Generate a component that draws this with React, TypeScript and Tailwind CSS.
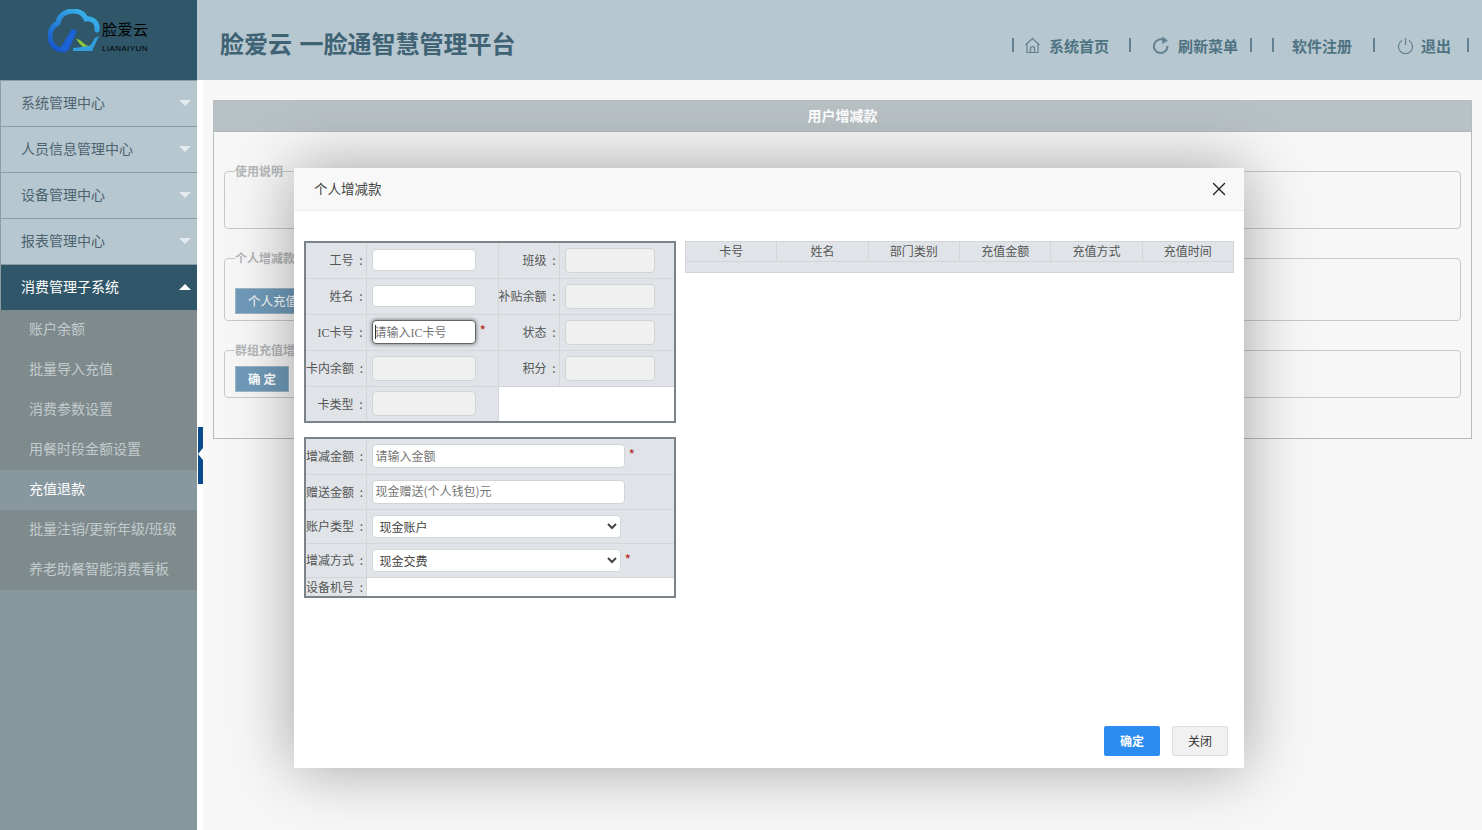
import React from 'react';
import { X } from 'lucide-react';

const font = "[font-family:'Noto_Sans_CJK_SC','Microsoft_YaHei',sans-serif]";

const menus = ['系统管理中心', '人员信息管理中心', '设备管理中心', '报表管理中心'];
const subMenus = ['账户余额', '批量导入充值', '消费参数设置', '用餐时段金额设置', '充值退款', '批量注销/更新年级/班级', '养老助餐智能消费看板'];

const Caret: React.FC<{ up?: boolean }> = ({ up }) => (
  <span
    className={`w-0 h-0 border-x-[6px] border-x-transparent ${up ? 'border-b-[6px] border-b-white' : 'border-t-[6px] border-t-[#e4ebee]'}`}
  />
);

const Logo: React.FC = () => (
  <div className="h-20 bg-[#2f5669] flex items-start pl-[48px] pt-[9px] shrink-0">
    <svg width="54" height="46" viewBox="0 0 54 46" fill="none">
      <defs>
        <linearGradient id="cloud" x1="0" y1="1" x2="0.8" y2="0">
          <stop offset="0" stopColor="#1450c8" />
          <stop offset="1" stopColor="#39b6ea" />
        </linearGradient>
      </defs>
      <path
        d="M16 41C6 41 2 34 2 27C2 20 6 16 10 14C11 6 18 2 25 2C31 2 36 5 38 10C44 9 50 13 49 21"
        stroke="url(#cloud)"
        strokeWidth="5"
        strokeLinecap="round"
      />
      <path d="M11 41L24 20L29 22L20 42Z" fill="#1b62d4" />
      <path d="M28 30C34 30 35 36 41 37C44 35 46 33 48 32C46 40 41 42 38 40C34 38 32 35 28 30Z" fill="#8cc63f" />
      <path d="M25 42H44L51 27L47 29L42 37L25 39Z" fill="#2f9fe0" />
    </svg>
    <div className="pt-[9px] text-black">
      <div className="text-[15px] leading-[22px] tracking-[0.5px]">脸爱云</div>
      <div className="text-[8px] leading-[12px] tracking-[0.4px] [font-family:'Liberation_Sans',sans-serif] mt-[3px]">LIANAIYUN</div>
    </div>
  </div>
);

const Sidebar: React.FC = () => (
  <aside className="w-[197px] shrink-0 bg-[#87989f] flex flex-col">
    <Logo />
    {menus.map((m, i) => (
      <div
        key={m}
        className={`bg-[#b6c7cf] border-l border-b border-[#8b9ca5] pl-5 pr-[6px] pb-[2px] flex items-center justify-between text-[14px] text-[#4d6370] ${i === 0 ? 'h-[47px] border-t' : 'h-[46px]'}`}
      >
        {m}
        <Caret />
      </div>
    ))}
    <div className="h-[45px] bg-[#2f5669] border-l border-[#8b9ca5] pl-5 pr-[6px] pb-[2px] flex items-center justify-between text-[14px] text-white">
      消费管理子系统
      <Caret up />
    </div>
    {subMenus.map((s) => (
      <div
        key={s}
        className={`h-10 pl-[29px] pb-[2px] flex items-center text-[14px] [font-family:'Liberation_Sans','Noto_Sans_CJK_SC',sans-serif] ${s === '充值退款' ? 'bg-[#87989f] text-white' : 'bg-[#7f8a8d] text-[#c3cace]'}`}
      >
        {s}
      </div>
    ))}
  </aside>
);

const Header: React.FC = () => (
  <header className="h-20 bg-[#b6c7cf] flex items-center justify-between pl-[23px] pr-[13px] text-[#4e7382] shrink-0">
    <h1 className="text-[24px] font-bold text-[#3f6375] leading-none pt-[6px] [word-spacing:2px]">脸爱云 一脸通智慧管理平台</h1>
    <nav className="flex items-center text-[15px] font-bold pt-[10px] leading-none">
      <span className="w-[2px] h-[14px] bg-[#628090]" />
      <svg className="ml-[10px]" width="17" height="17" viewBox="0 0 17 17" fill="none" stroke="#628090" strokeWidth="1.2">
        <path d="M1.5 8L8.5 1.5L15.5 8M3 7V15.5H14V7" />
        <path d="M6.5 15V11.5C6.5 9 10.5 9 10.5 11.5V15" />
      </svg>
      <span className="ml-[8px]">系统首页</span>
      <span className="ml-[20px] w-[2px] h-[14px] bg-[#628090]" />
      <svg className="ml-[21px]" width="17" height="18" viewBox="0 0 17 18" fill="none" stroke="#628090" strokeWidth="2">
        <path d="M12.5 4.5A6.8 6.8 0 1 0 15.5 10" />
        <path d="M10.5 1L15.5 4.5L10.5 7.5Z" fill="#628090" strokeWidth="0.5" />
      </svg>
      <span className="ml-[9px]">刷新菜单</span>
      <span className="ml-[12px] w-[2px] h-[14px] bg-[#628090]" />
      <span className="ml-[20px] w-[2px] h-[14px] bg-[#628090]" />
      <span className="ml-[18px]">软件注册</span>
      <span className="ml-[21px] w-[2px] h-[14px] bg-[#628090]" />
      <svg className="ml-[22px]" width="17" height="17" viewBox="0 0 17 17" fill="none" stroke="#628090" strokeWidth="1.2">
        <path d="M5 3.5A7 7 0 1 0 12 3.5" />
        <path d="M8.5 1V8" />
      </svg>
      <span className="ml-[7px]">退出</span>
      <span className="ml-[16px] w-[2px] h-[14px] bg-[#628090]" />
    </nav>
  </header>
);

const Fieldset: React.FC<{ title: string; className: string; children?: React.ReactNode }> = ({ title, className, children }) => (
  <fieldset className={`border border-[#c6c9ca] rounded-[4px] pl-[10px] ${className}`}>
    <legend className="text-[12px] leading-[14px] font-bold text-[#b4b6b7]">{title}</legend>
    {children}
  </fieldset>
);

const Panel: React.FC = () => (
  <div className="ml-[10px] mt-5 mr-[10px] h-[339px] border border-[#b5bcbf] flex flex-col">
    <div className="h-[31px] bg-[#b8c1c4] border-b border-[#b0b8bb] text-white text-[14px] font-bold pb-[2px] flex items-center justify-center shrink-0">用户增减款</div>
    <div className="px-[10px] pt-[32px] flex flex-col">
      <Fieldset title="使用说明" className="h-[65px]" />
      <Fieldset title="个人增减款" className="h-[70px] mt-[22px]">
        <button className="mt-[23px] h-[26px] w-[110px] bg-[#709bb9] border border-[#9bb5c6] text-white text-[12.5px] text-left pl-3">个人充值</button>
      </Fieldset>
      <Fieldset title="群组充值增减款" className="h-[55px] mt-[22px]">
        <button className="mt-[9px] h-[26px] w-[54px] bg-[#709bb9] border border-[#9bb5c6] text-white text-[12.5px] font-bold">确 定</button>
      </Fieldset>
    </div>
  </div>
);

const cell = 'border border-[#d2d6d9] bg-[#e0e4e8] p-0';
const labelCell = `${cell} text-right text-[12px] text-[#555] whitespace-nowrap pr-[3px] [word-spacing:3px]`;

const boxBase = 'block rounded-[4px] text-[12px] outline-none placeholder:text-[#757575]';

const TextBox: React.FC<{ disabled?: boolean; placeholder?: string; wide?: boolean }> = ({ disabled, placeholder, wide }) => (
  <input
    disabled={disabled}
    placeholder={placeholder}
    className={`${boxBase} border border-[#d0d4d6] ${wide ? 'w-[253px] h-[24px] bg-white px-[3px] pb-[2px]' : disabled ? 'w-[104px] h-[25px] bg-[#f0f0f0] px-[2px]' : 'w-[104px] h-[22px] bg-white px-[2px]'}`}
  />
);

const FocusedBox: React.FC = () => (
  <div className="relative">
    <input
      placeholder="请输入IC卡号"
      className={`${boxBase} w-[104px] h-[24px] px-[2px] pt-[2px] bg-white border border-[#666] shadow-[0_0_4px_rgba(0,0,0,0.55)] [font-family:'Liberation_Serif','Noto_Sans_CJK_SC',serif]`}
    />
    <span className="absolute left-[3px] top-[5px] w-px h-[14px] bg-[#333]" />
  </div>
);

const Star: React.FC<{ className?: string }> = ({ className }) => (
  <span className={`text-[#b3261e] text-[14px] leading-none ml-[4px] mt-[3px] ${className ?? ''}`}>*</span>
);

const infoRows: { a: React.ReactNode; b?: string; focus?: boolean; aDisabled?: boolean }[] = [
  { a: '工号 :', b: '班级 :' },
  { a: '姓名 :', b: '补贴余额 :' },
  { a: <><span className="[font-family:'Liberation_Serif',serif]">IC</span>卡号 :</>, b: '状态 :', focus: true },
  { a: '卡内余额 :', b: '积分 :', aDisabled: true },
  { a: '卡类型 :', aDisabled: true },
];

const InfoTable: React.FC = () => (
  <table className="w-[372px] border-collapse border-2 border-[#7a8488] table-fixed">
    <colgroup>
      <col className="w-[61px]" />
      <col className="w-[132px]" />
      <col className="w-[61px]" />
      <col />
    </colgroup>
    <tbody>
      {infoRows.map((r, i) => (
        <tr key={i} className="h-[36px]">
          <td className={labelCell}>{r.a}</td>
          <td className={`${cell} pl-[5px]`}>
            {r.focus ? (
              <div className="flex items-start">
                <FocusedBox />
                <Star />
              </div>
            ) : (
              <TextBox disabled={r.aDisabled} />
            )}
          </td>
          {r.b ? (
            <>
              <td className={labelCell}>{r.b}</td>
              <td className={`${cell} pl-[5px]`}>
                <input disabled className="block w-[90px] h-[25px] rounded-[4px] bg-[#f0f0f0] border border-[#d0d4d6]" />
              </td>
            </>
          ) : (
            <td colSpan={2} className="bg-white" />
          )}
        </tr>
      ))}
    </tbody>
  </table>
);

const AmountSelect: React.FC<{ value: string }> = ({ value }) => (
  <select defaultValue={value} className="block w-[249px] h-[23px] rounded-[4px] bg-white border border-[#d5d8da] text-[12px] text-[#444] pl-[3px] outline-none">
    <option>{value}</option>
  </select>
);

const AmountTable: React.FC = () => (
  <table className="w-[372px] mt-[14px] border-collapse border-2 border-[#7a8488] table-fixed">
    <colgroup>
      <col className="w-[61px]" />
      <col />
    </colgroup>
    <tbody>
      <tr className="h-[36px]">
        <td className={labelCell}>增减金额 :</td>
        <td className={`${cell} pl-[5px]`}>
          <div className="flex items-start">
            <TextBox wide placeholder="请输入金额" />
            <Star />
          </div>
        </td>
      </tr>
      <tr className="h-[35px]">
        <td className={labelCell}>赠送金额 :</td>
        <td className={`${cell} pl-[5px]`}>
          <TextBox wide placeholder="现金赠送(个人钱包)元" />
        </td>
      </tr>
      <tr className="h-[34px]">
        <td className={labelCell}>账户类型 :</td>
        <td className={`${cell} pl-[5px]`}>
          <AmountSelect value="现金账户" />
        </td>
      </tr>
      <tr className="h-[34px]">
        <td className={labelCell}>增减方式 :</td>
        <td className={`${cell} pl-[5px]`}>
          <div className="flex items-start">
            <AmountSelect value="现金交费" />
            <Star />
          </div>
        </td>
      </tr>
      <tr className="h-[19px]">
        <td className={labelCell}>设备机号 :</td>
        <td className="bg-white" />
      </tr>
    </tbody>
  </table>
);

const RecordTable: React.FC = () => (
  <table className="w-[549px] h-[31px] border-collapse table-fixed self-start">
    <thead>
      <tr className="h-[20px]">
        {['卡号', '姓名', '部门类别', '充值金额', '充值方式', '充值时间'].map((c) => (
          <th key={c} className="border border-[#d2d6d9] bg-[#e0e4e8] text-[12px] font-normal text-[#555] leading-none pb-[2px]">{c}</th>
        ))}
      </tr>
    </thead>
    <tbody>
      <tr className="h-[11px]">
        <td colSpan={6} className="border border-[#d2d6d9] bg-[#e0e4e8]" />
      </tr>
    </tbody>
  </table>
);

const Modal: React.FC = () => (
  <div className="absolute left-[294px] top-[168px] w-[950px] h-[600px] bg-white shadow-[0_0_60px_rgba(0,0,0,0.35)] flex flex-col">
    <div className="h-[43px] bg-[#f8f8f8] border-b border-[#eee] pl-5 pr-[14px] flex items-center justify-between text-[13.5px] text-[#444] shrink-0">
      <span className="pb-[2px]">个人增减款</span>
      <X size={22} strokeWidth={1.5} className="text-[#222]" />
    </div>
    <div className="flex-1 flex gap-[9px] pl-[10px] pt-[30px]">
      <div>
        <InfoTable />
        <AmountTable />
      </div>
      <RecordTable />
    </div>
    <div className="flex justify-end gap-3 pr-4 pb-3">
      <button className="w-14 h-[30px] rounded-[2px] bg-[#2d8cf0] text-white text-[12px] font-bold">确定</button>
      <button className="w-14 h-[30px] rounded-[2px] bg-[#f1f1f1] border border-[#dedede] text-[#333] text-[12px]">关闭</button>
    </div>
  </div>
);

export default function App() {
  return (
    <div className={`relative w-[1482px] h-[830px] overflow-hidden flex bg-white ${font}`}>
      <Sidebar />
      <div className="flex-1 flex flex-col min-w-0">
        <Header />
        <div className="flex-1 flex">
          <div className="w-[6px] shrink-0">
            <div className="relative w-[5px] h-[57px] ml-[1px] mt-[347px] bg-[#0b4b8c]">
              <span className="absolute left-0 top-[21px] w-0 h-0 border-y-[6px] border-y-transparent border-r-[5px] border-r-white" />
            </div>
          </div>
          <main className="flex-1 bg-[#f7f7f7] min-w-0">
            <Panel />
          </main>
        </div>
      </div>
      <Modal />
    </div>
  );
}
